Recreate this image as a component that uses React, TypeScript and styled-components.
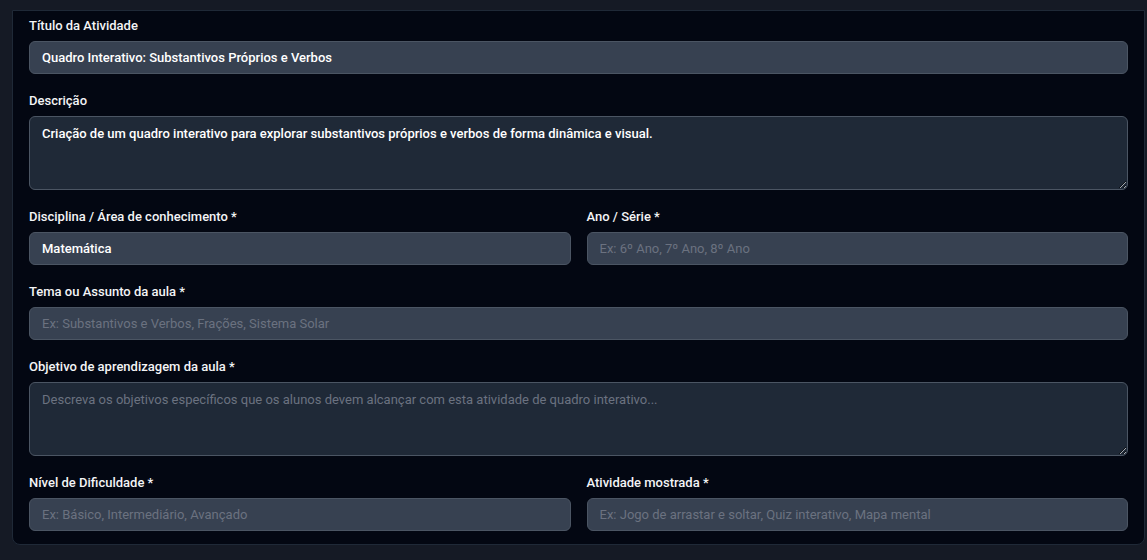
import React from "react";
import styled, { createGlobalStyle } from "styled-components";

const Global = createGlobalStyle`
  html, body { margin: 0; padding: 0; background: #151a25; }
  body { font-family: Roboto, "Liberation Sans", Arial, sans-serif; }
  * { box-sizing: border-box; }
`;

const Page = styled.div`
  min-height: 560px;
  background: #151a25;
  padding: 10px 2px 0 12px;
`;

const Card = styled.div`
  background: #030712;
  border: 1px solid #1f2937;
  border-radius: 0 0 8px 8px;
  padding: 5px 16px 13px 16px;
  display: flex;
  flex-direction: column;
  gap: 17px;
`;

const Row = styled.div`
  display: grid;
  grid-template-columns: 1fr 1fr;
  gap: 16px;
`;

const Field = styled.div`
  display: flex;
  flex-direction: column;
  gap: 5px;
`;

const Label = styled.label`
  display: block;
  height: 20px;
  line-height: 20px;
  font-size: 13px;
  font-weight: 500;
  color: #f3f4f6;
`;

const Input = styled.input`
  display: block;
  width: 100%;
  height: 33px;
  padding: 0 12px;
  border: 1px solid #4b5563;
  border-radius: 6px;
  background: #374151;
  color: #ffffff;
  font-family: inherit;
  font-size: 13px;
  font-weight: 500;
  outline: none;
  &::placeholder { color: #6b7280; font-weight: 400; }
`;

const TextArea = styled.textarea`
  display: block;
  width: 100%;
  height: 74px;
  padding: 7px 12px;
  border: 1px solid #4b5563;
  border-radius: 6px;
  background: #1f2937;
  color: #ffffff;
  font-family: inherit;
  font-size: 13px;
  font-weight: 500;
  line-height: 20px;
  outline: none;
  resize: vertical;
  color-scheme: dark;
  &::placeholder { color: #6b7280; font-weight: 400; }
`;

export default function App() {
  return (
    <Page>
      <Global />
      <Card>
        <Field>
          <Label>Título da Atividade</Label>
          <Input readOnly value="Quadro Interativo: Substantivos Próprios e Verbos" />
        </Field>
        <Field>
          <Label>Descrição</Label>
          <TextArea
            readOnly
            value="Criação de um quadro interativo para explorar substantivos próprios e verbos de forma dinâmica e visual."
          />
        </Field>
        <Row>
          <Field>
            <Label>Disciplina / Área de conhecimento *</Label>
            <Input readOnly value="Matemática" />
          </Field>
          <Field>
            <Label>Ano / Série *</Label>
            <Input placeholder="Ex: 6º Ano, 7º Ano, 8º Ano" />
          </Field>
        </Row>
        <Field>
          <Label>Tema ou Assunto da aula *</Label>
          <Input placeholder="Ex: Substantivos e Verbos, Frações, Sistema Solar" />
        </Field>
        <Field>
          <Label>Objetivo de aprendizagem da aula *</Label>
          <TextArea placeholder="Descreva os objetivos específicos que os alunos devem alcançar com esta atividade de quadro interativo..." />
        </Field>
        <Row>
          <Field>
            <Label>Nível de Dificuldade *</Label>
            <Input placeholder="Ex: Básico, Intermediário, Avançado" />
          </Field>
          <Field>
            <Label>Atividade mostrada *</Label>
            <Input placeholder="Ex: Jogo de arrastar e soltar, Quiz interativo, Mapa mental" />
          </Field>
        </Row>
      </Card>
    </Page>
  );
}
